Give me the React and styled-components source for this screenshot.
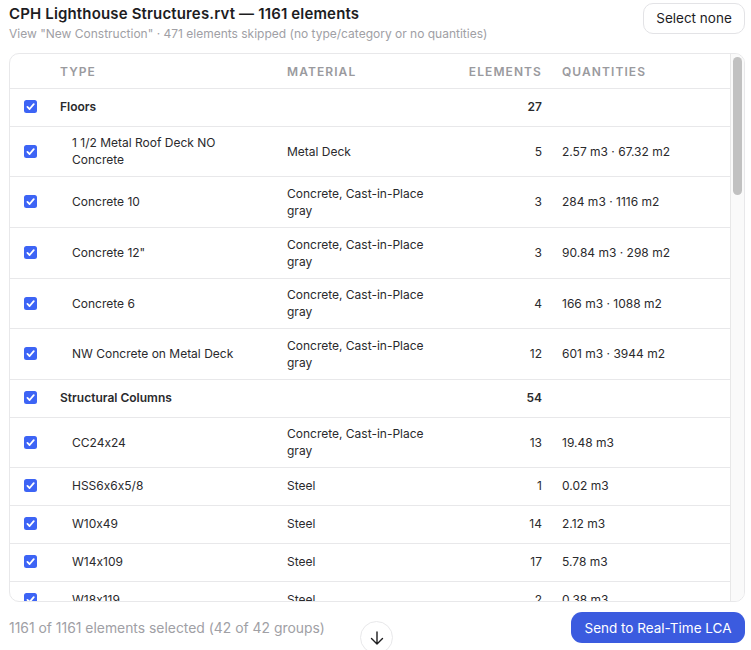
import React from 'react';
import styled, { createGlobalStyle } from 'styled-components';

const Global = createGlobalStyle`
  html, body { margin: 0; padding: 0; background: #fff; height: 100%; overflow: hidden; }
  body { font-family: Inter, "Liberation Sans", sans-serif; color: #1d1d1f; font-feature-settings: "calt" 0; }
`;
const Page = styled.div`
  position: relative; width: 751px; height: 650px; overflow: hidden;
  display: flex; flex-direction: column; padding: 3px 6px 0 9px; box-sizing: border-box;
`;
const Top = styled.header`
  display: flex; justify-content: space-between; align-items: flex-start; height: 50px;
`;
const Heading = styled.div`display: flex; flex-direction: column; gap: 1px;`;
const Title = styled.h1`margin: 0; font-size: 15px; letter-spacing: .01em; line-height: 22px; font-weight: 600; color: #1d1d1f;`;
const Sub = styled.p`margin: 0; font-size: 12px; line-height: 15px; color: #a0a0a5;`;
const GhostButton = styled.button`
  height: 31px; width: 102px; border: 1px solid #e3e3e6; border-radius: 10px; background: #fff;
  font: 400 13.5px Inter, sans-serif; color: #1d1d1f; padding: 0 0 1px;
`;
const Card = styled.div`
  position: relative; height: 549px; box-sizing: border-box; border: 1px solid #e8e8ea; border-radius: 10px; overflow: hidden;
`;
const Rail = styled.div`
  position: absolute; top: 0; right: 0; bottom: 0; width: 14px; box-sizing: border-box;
  background: #fafafa; border-left: 1px solid #e8e8e8;
`;
const Thumb = styled.div`
  position: absolute; top: 3px; left: 2px; width: 9px; height: 138px; border-radius: 5px; background: #c1c1c1;
`;
const Table = styled.table`
  width: 720px; table-layout: fixed; border-collapse: collapse; font-size: 12px; line-height: 17px;
`;
const Th = styled.th`
  height: 34px; box-sizing: border-box; padding: 2px 0 0 ${p => p.$indent || 0}px;
  font-size: 12px; font-weight: 600; letter-spacing: .09em; text-transform: uppercase;
  color: #9a9a9e; text-align: ${p => (p.$right ? 'right' : 'left')}; border-bottom: 1px solid #e8e8ea;
`;
const Row = styled.tr`
  height: ${p => p.$h}px;
`;
const Td = styled.td`
  padding: 0 ${p => p.$pr || 0}px ${p => (p.$tall ? 0 : 2)}px ${p => p.$indent || 0}px;
  border-bottom: 1px solid #e8e8ea; vertical-align: middle; color: #2a2a2d;
  font-weight: ${p => (p.$bold ? 600 : 400)};
  text-align: ${p => (p.$right ? 'right' : 'left')};
`;
const CheckCell = styled.td`
  padding: 0 0 ${p => (p.$tall ? 0 : 2)}px 14px; border-bottom: 1px solid #e8e8ea; vertical-align: middle;
`;
const Box = styled.span`
  display: flex; align-items: center; justify-content: center; width: 13px; height: 13px; border-radius: 2.5px; background: #3d64f5;
`;
const Foot = styled.footer`
  display: flex; justify-content: space-between; align-items: center; padding-top: 10px;
`;
const Count = styled.span`font-size: 13.9px; color: #a0a0a5;`;
const SendButton = styled.button`
  width: 174px; height: 31px; border: 0; border-radius: 11px; background: #3b5bdf; color: #fff;
  font: 400 13.5px Inter, sans-serif; padding: 0;
`;
const ScrollDown = styled.button`
  position: absolute; left: 360px; top: 621px; width: 33px; height: 33px; box-sizing: border-box; padding: 0;
  border-radius: 50%; border: 1px solid #e8e8ea; background: #fff; display: flex; align-items: center; justify-content: center;
`;

const rows = [
  { group: 'Floors', n: 27 },
  { t: '1 1/2 Metal Roof Deck NO Concrete', m: 'Metal Deck', n: 5, q: '2.57 m3 · 67.32 m2', h: 50 },
  { t: 'Concrete 10', m: 'Concrete, Cast-in-Place gray', n: 3, q: '284 m3 · 1116 m2', h: 51 },
  { t: 'Concrete 12"', m: 'Concrete, Cast-in-Place gray', n: 3, q: '90.84 m3 · 298 m2', h: 51 },
  { t: 'Concrete 6', m: 'Concrete, Cast-in-Place gray', n: 4, q: '166 m3 · 1088 m2', h: 50 },
  { t: 'NW Concrete on Metal Deck', m: 'Concrete, Cast-in-Place gray', n: 12, q: '601 m3 · 3944 m2', h: 51 },
  { group: 'Structural Columns', n: 54 },
  { t: 'CC24x24', m: 'Concrete, Cast-in-Place gray', n: 13, q: '19.48 m3', h: 50 },
  { t: 'HSS6x6x5/8', m: 'Steel', n: 1, q: '0.02 m3', h: 38 },
  { t: 'W10x49', m: 'Steel', n: 14, q: '2.12 m3', h: 38 },
  { t: 'W14x109', m: 'Steel', n: 17, q: '5.78 m3', h: 38 },
  { t: 'W18x119', m: 'Steel', n: 2, q: '0.38 m3', h: 38 },
];

const Check = () => (
  <Box>
    <svg width="9" height="9" viewBox="0 0 10 10" fill="none">
      <path d="M1.6 5.4 4 7.8 8.6 2.4" stroke="#fff" strokeWidth="2" strokeLinecap="round" strokeLinejoin="round" />
    </svg>
  </Box>
);

export default function App() {
  return (
    <>
      <Global />
      <Page>
        <Top>
          <Heading>
            <Title>CPH Lighthouse Structures.rvt — 1161 elements</Title>
            <Sub>View "New Construction" · 471 elements skipped (no type/category or no quantities)</Sub>
          </Heading>
          <GhostButton>Select none</GhostButton>
        </Top>
        <Card>
          <Table>
            <colgroup>
              <col style={{ width: 50 }} />
              <col style={{ width: 227 }} />
              <col style={{ width: 160 }} />
              <col style={{ width: 95 }} />
              <col />
            </colgroup>
            <thead>
              <tr>
                <Th />
                <Th>Type</Th>
                <Th>Material</Th>
                <Th $right>Elements</Th>
                <Th $indent={20}>Quantities</Th>
              </tr>
            </thead>
            <tbody>
              {rows.map((r, i) => {
                if (r.group) {
                  return (
                    <Row key={i} $h={38}>
                      <CheckCell><Check /></CheckCell>
                      <Td $bold>{r.group}</Td>
                      <Td />
                      <Td $bold $right>{r.n}</Td>
                      <Td />
                    </Row>
                  );
                }
                const tall = r.h > 38;
                return (
                  <Row key={i} $h={r.h}>
                    <CheckCell $tall={tall}><Check /></CheckCell>
                    <Td $tall={tall} $indent={12} $pr={30}>{r.t}</Td>
                    <Td $tall={tall} $pr={10}>{r.m}</Td>
                    <Td $tall={tall} $right>{r.n}</Td>
                    <Td $tall={tall} $indent={20}>{r.q}</Td>
                  </Row>
                );
              })}
            </tbody>
          </Table>
          <Rail><Thumb /></Rail>
        </Card>
        <Foot>
          <Count>1161 of 1161 elements selected (42 of 42 groups)</Count>
          <SendButton>Send to Real-Time LCA</SendButton>
        </Foot>
        <ScrollDown aria-label="Scroll down">
          <svg width="16" height="16" viewBox="0 0 16 16" fill="none" stroke="#1d1d1f" strokeWidth="1.4" strokeLinecap="round" strokeLinejoin="round">
            <path d="M8 2v12M2.5 8.5 8 14l5.5-5.5" />
          </svg>
        </ScrollDown>
      </Page>
    </>
  );
}
